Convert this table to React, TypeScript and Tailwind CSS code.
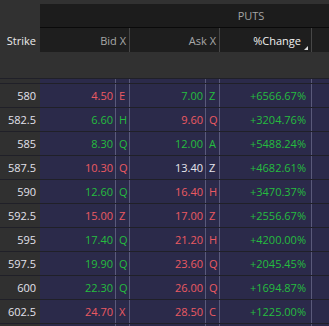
import React from "react";

type Quote = {
  strike: string;
  bid: string;
  bidX: string;
  bidC: string;
  ask: string;
  askX: string;
  askC: string;
  chg: string;
};

const RED = "text-[#ec5a62]";
const GREEN = "text-[#25bd3f]";
const WHITE = "text-[#e6e6ee]";

const rows: Quote[] = [
  { strike: "580", bid: "4.50", bidX: "E", bidC: RED, ask: "7.00", askX: "Z", askC: GREEN, chg: "+6566.67%" },
  { strike: "582.5", bid: "6.60", bidX: "H", bidC: GREEN, ask: "9.60", askX: "Q", askC: RED, chg: "+3204.76%" },
  { strike: "585", bid: "8.30", bidX: "Q", bidC: GREEN, ask: "12.00", askX: "A", askC: GREEN, chg: "+5488.24%" },
  { strike: "587.5", bid: "10.30", bidX: "Q", bidC: RED, ask: "13.40", askX: "Z", askC: WHITE, chg: "+4682.61%" },
  { strike: "590", bid: "12.60", bidX: "Q", bidC: GREEN, ask: "16.40", askX: "H", askC: RED, chg: "+3470.37%" },
  { strike: "592.5", bid: "15.00", bidX: "Z", bidC: RED, ask: "17.00", askX: "Z", askC: RED, chg: "+2556.67%" },
  { strike: "595", bid: "17.40", bidX: "Q", bidC: GREEN, ask: "21.20", askX: "H", askC: RED, chg: "+4200.00%" },
  { strike: "597.5", bid: "19.90", bidX: "Q", bidC: GREEN, ask: "23.60", askX: "Q", askC: RED, chg: "+2045.45%" },
  { strike: "600", bid: "22.30", bidX: "Q", bidC: GREEN, ask: "26.00", askX: "Q", askC: RED, chg: "+1694.87%" },
  { strike: "602.5", bid: "24.70", bidX: "X", bidC: RED, ask: "28.50", askX: "C", askC: RED, chg: "+1225.00%" },
];

const cols = "grid grid-cols-[40px_75px_14px_76px_14px_92px_18px]";

const Row = ({ q }: { q?: Quote }) => (
  <div className={`${cols} h-6 border-t border-[#202028] items-stretch`}>
    <div className="bg-[#303030] flex items-center justify-end pr-1 text-[#e2e2ec]">{q?.strike}</div>
    <div className={`bg-[#2b2a4a] flex items-center justify-end pr-[2px] ${q?.bidC}`}>{q?.bid}</div>
    <div className={`bg-[#2b2a4a] border-l border-[#5a5a7a] flex items-center pl-[3px] ${q?.bidC}`}>{q?.bidX}</div>
    <div className={`bg-[#2b2a4a] border-l border-[#5a5a7a] flex items-center justify-end pr-[2px] ${q?.askC}`}>{q?.ask}</div>
    <div className={`bg-[#2b2a4a] border-l border-[#5a5a7a] flex items-center pl-[3px] ${q?.askC}`}>{q?.askX}</div>
    <div className={`bg-[#2b2a4a] border-l border-[#5a5a7a] flex items-center justify-end pr-[5px] ${GREEN}`}>{q?.chg}</div>
    <div className="bg-[#2b2a4a] border-l border-[#5a5a7a]" />
  </div>
);

const OptionChain: React.FC = () => {
  return (
    <div className="w-[329px] h-[326px] overflow-hidden bg-[#313131] text-[11px] font-['Open_Sans',sans-serif] leading-none">
      {/* group header */}
      <div className="flex h-7 pt-1">
        <div className="w-10" />
        <div className="flex-1 bg-[#1c1c1c] border-b border-[#0a0a0a] flex justify-end">
          <div className="w-[156px] flex items-center justify-center text-[#a4a4a4] pb-[1px]">PUTS</div>
        </div>
      </div>

      {/* column header */}
      <div className="flex h-6">
        <div className="w-10 flex items-center justify-end pr-1 text-[#ececec]">Strike</div>
        <div className="w-[89px] bg-[#1e1e1e] flex items-center justify-end pr-[3px] text-[#a8a8a8]">Bid X</div>
        <div className="w-[90px] bg-[#1e1e1e] border-l border-[#474747] flex items-center justify-end pr-[3px] text-[#a8a8a8]">Ask X</div>
        <div className="w-[92px] bg-[#1e1e1e] border-l border-[#474747] relative flex items-center justify-end pr-[10px] text-[#f0f0f0]">
          %Change
          <svg className="absolute right-[3px] bottom-[2px]" width="4" height="4" viewBox="0 0 4 4">
            <polygon points="4,0 4,4 0,4" fill="#dcdcdc" />
          </svg>
        </div>
        <div className="flex-1 bg-[#1e1e1e] border-l border-[#474747]" />
      </div>

      <div className="h-[26px]" />

      {/* partially scrolled row */}
      <div className={`${cols} h-[5px] border-t border-[#202028]`}>
        <div className="bg-[#303030]" />
        <div className="bg-[#2b2a4a]" />
        <div className="bg-[#2b2a4a] border-l border-[#5a5a7a]" />
        <div className="bg-[#2b2a4a] border-l border-[#5a5a7a]" />
        <div className="bg-[#2b2a4a] border-l border-[#5a5a7a]" />
        <div className="bg-[#2b2a4a] border-l border-[#5a5a7a]" />
        <div className="bg-[#2b2a4a] border-l border-[#5a5a7a]" />
      </div>

      {rows.map((q) => (
        <Row key={q.strike} q={q} />
      ))}
      <Row />
    </div>
  );
};

export default function App() {
  return <OptionChain />;
}
